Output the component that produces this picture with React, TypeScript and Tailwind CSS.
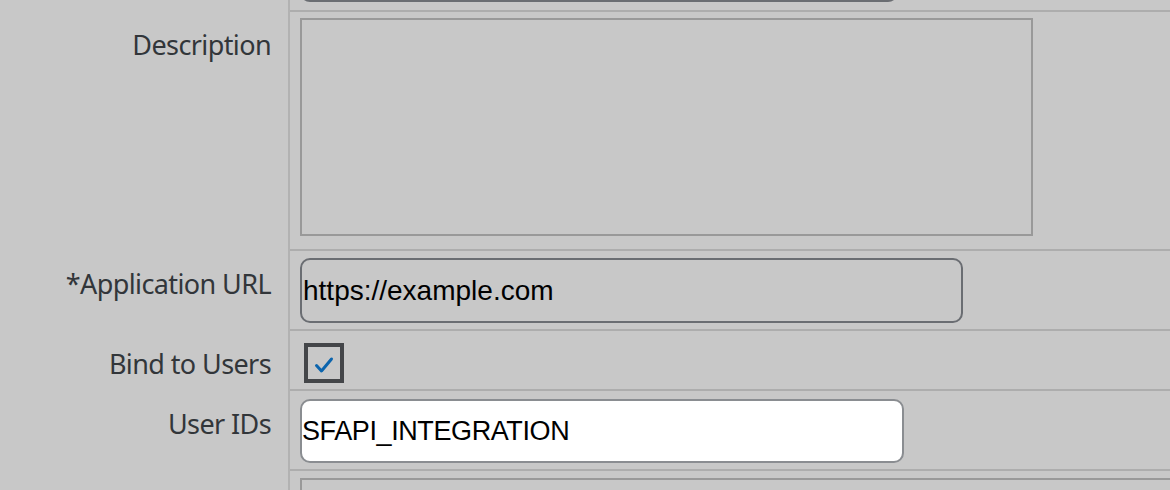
import { ReactNode } from "react";

const labelFont = { fontFamily: '"Noto Sans", "Open Sans", sans-serif' };
const inputFont = { fontFamily: '"Liberation Sans", Arial, sans-serif' };

interface FieldRowProps {
    label?: string;
    rowClass: string;
    cellClass: string;
    children?: ReactNode;
}

function FieldRow({ label, rowClass, cellClass, children }: FieldRowProps) {
    return (
        <div className={`flex shrink-0 ${rowClass}`}>
            <div className="w-[290px] shrink-0 border-r-2 border-[#b2b2b2] pr-[17px] pt-[17px] text-right">
                {label && (
                    <span className="text-[27px] leading-[32px] tracking-[-0.6px] text-[#32363a]" style={labelFont}>
                        {label}
                    </span>
                )}
            </div>
            <div className={`flex-1 border-b-2 border-[#adadad] pl-[10px] ${cellClass}`}>{children}</div>
        </div>
    );
}

function CheckBox() {
    return (
        <div className="w-[40px] h-[40px] border-4 border-[#444649] flex items-end justify-center pb-[5px]">
            <svg width="20" height="18" viewBox="0 0 20 18" fill="none">
                <path d="M2.5 9.5 L7.5 15 L17.5 3" stroke="#0b64ad" strokeWidth="3" strokeLinecap="round" strokeLinejoin="round" />
            </svg>
        </div>
    );
}

export default function App() {
    return (
        <div className="w-[1170px] h-[490px] overflow-hidden bg-[#c8c8c8] flex flex-col">
            <FieldRow rowClass="h-[12px]" cellClass="overflow-hidden relative">
                <div className="absolute left-[10px] bottom-[8px] w-[598px] h-[60px] rounded-[10px] border-2 border-[#6a6d72]" />
            </FieldRow>

            <FieldRow label="Description" rowClass="h-[239px]" cellClass="pt-[6px]">
                <div className="w-[733px] h-[218px] border-2 border-[#999999]" />
            </FieldRow>

            <FieldRow label="*Application URL" rowClass="h-[80px]" cellClass="pt-[7px]">
                <div className="w-[663px] h-[65px] rounded-[10px] border-2 border-[#6a6d72] flex items-center pl-[1px]">
                    <span className="text-[28px] text-black" style={inputFont}>
                        https://example.com
                    </span>
                </div>
            </FieldRow>

            <FieldRow label="Bind to Users" rowClass="h-[60px]" cellClass="pt-[12px] pl-[14px]">
                <CheckBox />
            </FieldRow>

            <FieldRow label="User IDs" rowClass="h-[80px]" cellClass="pt-[8px]">
                <div className="w-[604px] h-[64px] rounded-[10px] border-2 border-[#8a8d91] bg-white flex items-center">
                    <span className="text-[27px] text-black tracking-[-0.4px]" style={inputFont}>
                        SFAPI_INTEGRATION
                    </span>
                </div>
            </FieldRow>

            <FieldRow rowClass="h-[60px]" cellClass="pt-[7px] overflow-hidden">
                <div className="w-[1000px] h-[60px] border-2 border-[#999999]" />
            </FieldRow>
        </div>
    );
}
